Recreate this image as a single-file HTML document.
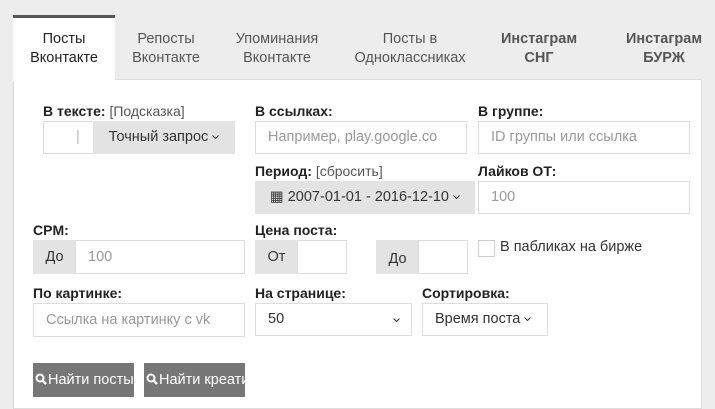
<!DOCTYPE html><html><head><meta charset="utf-8"><style>
body{margin:0;width:715px;height:400px;background:#ededed;font-family:"Liberation Sans","DejaVu Sans",sans-serif;position:relative;overflow:hidden;color:#333}
.a{position:absolute;box-sizing:border-box}
.tab{position:absolute;top:30px;font-size:14.5px;line-height:19px;text-align:center;color:#555;transform:translateX(-50%);white-space:nowrap}
.lbl{position:absolute;font-size:14px;font-weight:bold;color:#222;white-space:nowrap}
.lbl span{font-weight:normal;color:#555}
.in{position:absolute;box-sizing:border-box;background:#fff;border:1px solid #ddd;font-size:14.5px;color:#999;padding-left:12px;white-space:nowrap;overflow:hidden}
.ad{position:absolute;box-sizing:border-box;background:#e3e3e3;font-size:14.5px;color:#333;text-align:center;white-space:nowrap}
.btn{position:absolute;background:#777;color:#fff;font-size:14.5px;white-space:nowrap;overflow:hidden;box-sizing:border-box;padding-left:2px}
.ch{display:inline-block;width:7px;height:4px;margin-left:4px;vertical-align:middle}
</style></head><body>
<div class="a" style="left:13px;top:79px;width:689px;height:330px;background:#fff;border:1px solid #ddd"></div>
<div class="a" style="left:13px;top:15px;width:102px;height:66px;background:#fff;border-top:3px solid #555"></div>
<div class="tab" style="left:64px;color:#222">Посты<br>Вконтакте</div>
<div class="tab" style="left:166px">Репосты<br>Вконтакте</div>
<div class="tab" style="left:277px">Упоминания<br>Вконтакте</div>
<div class="tab" style="left:410px">Посты в<br>Одноклассниках</div>
<div class="tab" style="left:539px;font-weight:bold">Инстаграм<br>СНГ</div>
<div class="tab" style="left:664px;font-weight:bold">Инстаграм<br>БУРЖ</div>

<div class="lbl" style="left:43px;top:103px">В тексте: <span>[Подсказка]</span></div>
<div class="in" style="left:43px;top:121px;width:51px;height:33px;line-height:31px;color:#bbb;padding-left:32px">|</div>
<div class="ad" style="left:93px;top:121px;width:142px;height:33px;line-height:33px">Точный запрос<svg class="ch" viewBox="0 0 7 4"><path d="M0.5 0.5L3.5 3.5L6.5 0.5" stroke="#333" fill="none"/></svg></div>
<div class="lbl" style="left:255px;top:103px">В ссылках:</div>
<div class="in" style="left:255px;top:121px;width:212px;height:33px;line-height:31px">Например, play.google.co</div>
<div class="lbl" style="left:478px;top:103px">В группе:</div>
<div class="in" style="left:478px;top:121px;width:212px;height:33px;line-height:31px">ID группы или ссылка</div>

<div class="lbl" style="left:255px;top:163px">Период: <span>[сбросить]</span></div>
<div class="ad" style="left:255px;top:181px;width:220px;height:33px;line-height:33px">▦ 2007-01-01 - 2016-12-10<svg class="ch" viewBox="0 0 7 4"><path d="M0.5 0.5L3.5 3.5L6.5 0.5" stroke="#333" fill="none"/></svg></div>
<div class="lbl" style="left:478px;top:163px">Лайков ОТ:</div>
<div class="in" style="left:478px;top:181px;width:212px;height:33px;line-height:31px">100</div>

<div class="lbl" style="left:33px;top:222px">CPM:</div>
<div class="ad" style="left:33px;top:240px;width:43px;height:34px;line-height:34px">До</div>
<div class="in" style="left:75px;top:240px;width:170px;height:34px;line-height:32px">100</div>
<div class="lbl" style="left:255px;top:222px">Цена поста:</div>
<div class="ad" style="left:255px;top:240px;width:43px;height:34px;line-height:34px">От</div>
<div class="in" style="left:297px;top:240px;width:50px;height:34px"></div>
<div class="ad" style="left:376px;top:240px;width:43px;height:34px;line-height:38px">До</div>
<div class="in" style="left:418px;top:240px;width:50px;height:34px"></div>
<div class="a" style="left:478px;top:240px;width:17px;height:17px;border:1px solid #ccc;background:#fff"></div>
<div class="a" style="left:500px;top:239px;font-size:14.5px;color:#333">В пабликах на бирже</div>

<div class="lbl" style="left:33px;top:285px">По картинке:</div>
<div class="in" style="left:33px;top:303px;width:212px;height:34px;line-height:32px">Ссылка на картинку с vk</div>
<div class="lbl" style="left:255px;top:285px">На странице:</div>
<div class="in" style="left:255px;top:303px;width:157px;height:33px;line-height:31px;color:#333">50<svg class="ch" style="position:absolute;left:133px;top:14px" viewBox="0 0 7 4"><path d="M0.5 0.5L3.5 3.5L6.5 0.5" stroke="#333" fill="none"/></svg></div>
<div class="lbl" style="left:422px;top:285px">Сортировка:</div>
<div class="in" style="left:422px;top:303px;width:126px;height:33px;line-height:31px;color:#333">Время поста<svg class="ch" viewBox="0 0 7 4"><path d="M0.5 0.5L3.5 3.5L6.5 0.5" stroke="#333" fill="none"/></svg></div>

<div class="btn" style="left:33px;top:363px;width:101px;height:34px;line-height:34px"><svg width="13" height="13" viewBox="0 0 13 13" style="vertical-align:-2px"><circle cx="5" cy="5" r="3.5" stroke="#fff" stroke-width="2" fill="none"/><path d="M7.5 7.5L11 11" stroke="#fff" stroke-width="2.5"/></svg>Найти посты</div>
<div class="btn" style="left:144px;top:363px;width:101px;height:34px;line-height:34px"><svg width="13" height="13" viewBox="0 0 13 13" style="vertical-align:-2px"><circle cx="5" cy="5" r="3.5" stroke="#fff" stroke-width="2" fill="none"/><path d="M7.5 7.5L11 11" stroke="#fff" stroke-width="2.5"/></svg>Найти креативы</div>
</body></html>
